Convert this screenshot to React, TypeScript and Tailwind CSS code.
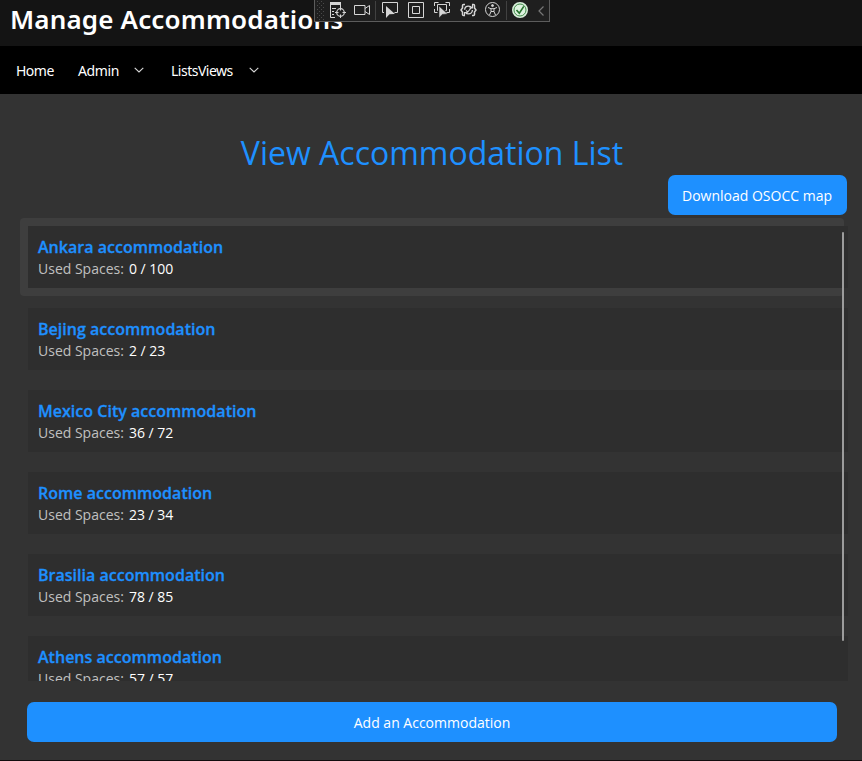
import React from "react";

const accommodations = [
  { name: "Ankara accommodation", used: 0, total: 100 },
  { name: "Bejing accommodation", used: 2, total: 23 },
  { name: "Mexico City accommodation", used: 36, total: 72 },
  { name: "Rome accommodation", used: 23, total: 34 },
  { name: "Brasilia accommodation", used: 78, total: 85 },
  { name: "Athens accommodation", used: 57, total: 57 },
];

function Chevron() {
  return (
    <svg width="10" height="6" viewBox="0 0 10 6" fill="none" stroke="#d8d8d8" strokeWidth="1.1">
      <path d="M0.7 0.8 5 5 9.3 0.8" />
    </svg>
  );
}

function DebugToolbar() {
  return (
    <div className="absolute left-[314px] top-0 h-[22px] w-[236px] border-x border-b border-[#5c5c5c] bg-[#1f1f1f]">
      <svg className="block" width="234" height="21" viewBox="315 0 234 21" fill="none" stroke="#d6d6d6" strokeWidth="1">
        <g fill="#4a4a4a" stroke="none">
          {[1, 5, 9, 13, 17].map((y) => (
            <React.Fragment key={y}>
              <rect x="317" y={y} width="1" height="1" />
              <rect x="321" y={y} width="1" height="1" />
              <rect x="319" y={y + 2} width="1" height="1" />
              <rect x="323" y={y + 2} width="1" height="1" />
            </React.Fragment>
          ))}
        </g>
        <rect x="330" y="2" width="11" height="3" fill="#d6d6d6" stroke="none" />
        <path d="M330.5 4v13.5H335M340.5 4v3M332 8.5h4M332 11.5h2M332 14.5h2" />
        <circle cx="340.5" cy="12.5" r="3.8" strokeWidth="1.2" />
        <path d="M340.5 7v3.5M340.5 14.5V18M335 12.5h3.5M342.5 12.5H346" />
        <path d="M354.5 5.5h10.5v9h-10.5zM365 8.5l4.5-3v9l-4.5-3" />
        <path d="M375.5 1v19" stroke="#414141" />
        <path d="M384 12.500h-1.500v-10h15v10h-3" />
        <path d="M386 6v12l3.500-3.700 5.500-.3z" fill="#d6d6d6" stroke="none" />
        <path d="M408.500 2.500h15v15h-15zM412.500 6.500h7v7h-7z" />
        <path d="M434.500 6V2.500h4M445.500 2.500h4V6M434.500 9v3.500h3M446 12.500h3.500V9M438 10.500h-.5v-6h9v6h-1" />
        <path d="M439 6v12l3.300-3.600 5.500-.4z" fill="#d6d6d6" stroke="#1f1f1f" strokeWidth="0.600" />
        <path d="M465 4.500h-1.500q-1 0-1 1V8l-1.500 2 1.500 2v2.500q0 1 1 1h1.500M472 4.500h1.500q1 0 1 1V8l1.500 2-1.500 2v2.500q0 1-1 1H472" strokeWidth="1.5" />
        <circle cx="468.500" cy="10" r="3.900" strokeWidth="1.400" strokeDasharray="9.5 2.75" />
        <path d="m466 10.500 1.800 1.500 4-5M472.500 4.500v3.300h-3M464.500 15.500v-3h3" strokeWidth="1.200" />
        <circle cx="492.500" cy="9.500" r="7" />
        <circle cx="492.500" cy="5.600" r="1" fill="#d6d6d6" />
        <path d="m488 7.500 3 1.200h3l3-1.200M491 8.700v3L489.500 15M494 8.700v3l1.500 3.300M491 11.500h3" />
        <path d="M506.500 1v19" stroke="#414141" />
        <circle cx="520" cy="10" r="7" fill="#ddf2df" stroke="#d8efda" strokeWidth="2" />
        <circle cx="520" cy="10" r="6" stroke="#438b4b" />
        <path d="m516.500 10 2.800 3.200 4.500-6.800" stroke="#28742f" strokeWidth="1.700" />
        <path d="m543.500 6.500-4.500 4.500 4.500 4.500" stroke="#777" strokeWidth="1.200" />
      </svg>
    </div>
  );
}

export default function App() {
  return (
    <div className="relative flex h-[761px] w-[862px] flex-col overflow-hidden border-b border-[#120c0e] bg-[#333333] font-['Open_Sans','Noto_Sans',sans-serif] text-sm text-white">
      <header className="h-[46px] shrink-0 bg-[#141414] pl-[10px]">
        <h1 className="whitespace-nowrap font-['Noto_Sans','Open_Sans',sans-serif] text-[26px] font-semibold leading-[38px] tracking-[0.16px]">Manage Accommodations</h1>
      </header>
      <DebugToolbar />
      <nav className="flex h-12 shrink-0 items-center bg-black pl-4 font-['Noto_Sans','Open_Sans',sans-serif] text-sm tracking-[-0.5px]">
        <span className="w-[62px] pt-0.5">Home</span>
        <span className="w-14 pt-0.5 tracking-[-0.4px]">Admin</span>
        <span className="w-[37px] pb-px"><Chevron /></span>
        <span className="w-[78px] pt-0.5">ListsViews</span>
        <span className="pb-px"><Chevron /></span>
      </nav>
      <main className="flex flex-col">
        <h2 className="mt-[37px] h-11 whitespace-nowrap pl-0.5 text-center text-[32px] leading-[44px] text-[#1e90ff]">
          View Accommodation List
        </h2>
        <button className="mr-[15px] h-10 w-[179px] self-end rounded-[7px] bg-[#1e90ff] pr-px pt-0.5 text-sm">Download OSOCC map</button>
        <section className="relative ml-5 mt-[3px] h-[463px] w-[828px] overflow-hidden">
          <ul className="flex flex-col gap-1">
            {accommodations.map((item, index) => (
              <li key={item.name} className={`h-[78px] w-[824px] shrink-0 rounded p-2 ${index === 0 ? "bg-[#3e3e3e]" : ""}`}>
                <div className="h-[62px] w-[820px] bg-[#2e2e2e] px-2.5 pt-2.5">
                  <div className="text-base font-semibold leading-[22px] tracking-[0.02px] text-[#1e90ff] [-webkit-text-stroke:0.3px_#1e90ff]">{item.name}</div>
                  <div className="flex gap-[5px] leading-[22px]">
                    <span className="text-[#c0c0c0]">Used Spaces:</span>
                    <span>{item.used} / {item.total}</span>
                  </div>
                </div>
              </li>
            ))}
          </ul>
          <div className="absolute left-[822px] top-[14px] h-[409px] w-0.5 rounded-full bg-[#9c9c9c]" />
        </section>
        <button className="ml-[27px] mt-[21px] h-10 w-[810px] rounded-[7px] bg-[#1e90ff] pt-0.5 text-sm">Add an Accommodation</button>
      </main>
    </div>
  );
}
